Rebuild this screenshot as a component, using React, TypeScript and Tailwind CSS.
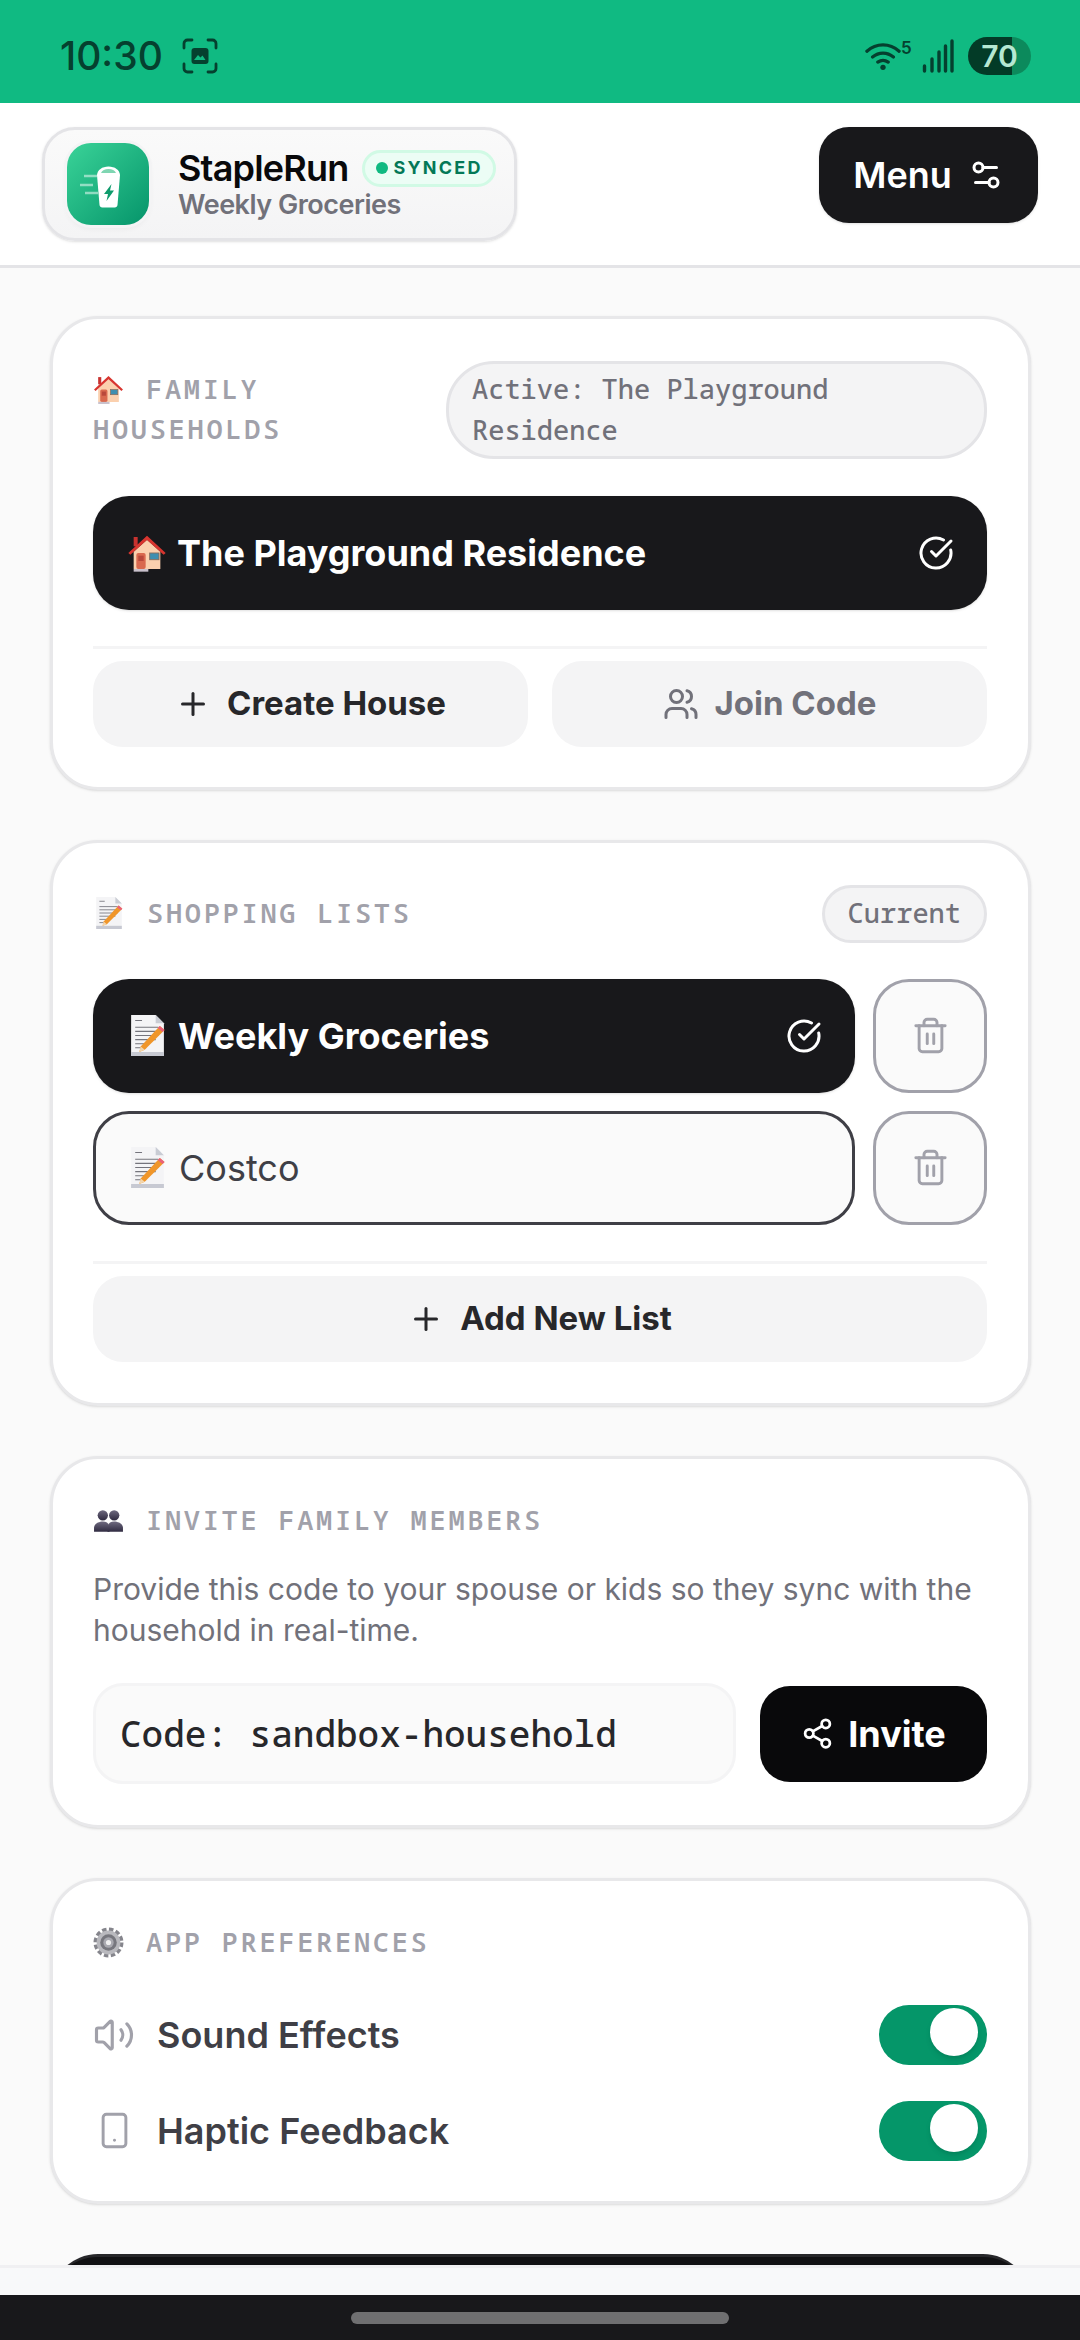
import { CircleCheckBig, Plus, Settings2, Share2, Smartphone, Trash2, Users, Volume2 } from 'lucide-react';
import type { ReactNode } from 'react';

function HouseEmoji({ size }: { size: number }) {
  return (
    <svg width={size} height={size} viewBox="0 0 30 30" className="shrink-0">
      <rect x="5" y="3" width="3" height="7" fill="#c8322f" />
      <path d="M5 14 15 5l10 9v13H5z" fill="#fbd0ae" />
      <path d="M1 15 15 2l14 13-1.500 1.400L15 5.200 2.500 16.400z" fill="#d8352f" />
      <rect x="7" y="15" width="7" height="12" rx="1.500" fill="#d9694f" />
      <rect x="8.500" y="17" width="4" height="4" fill="#b9483b" />
      <rect x="17" y="15" width="7" height="5" fill="#3f8fb0" stroke="#8a6d5c" strokeWidth="0.700" />
      <rect x="5" y="27" width="11" height="2" fill="#c9c1cc" />
    </svg>
  );
}

function MemoEmoji({ size }: { size: number }) {
  return (
    <svg width={size} height={size} viewBox="0 0 30 30" className="shrink-0">
      <path d="M3 0h18l6 6v24H3z" fill="#f4f4f6" />
      <path d="M21 0v6h6z" fill="#c9ccd4" />
      <path d="M3 27h24v3H3z" fill="#c7c9d2" />
      <path d="M6 4h5M6 9h17M6 12h17M6 15h17M6 18h15M6 21h10M6 24h8" stroke="#74747c" strokeWidth="0.800" />
      <path d="M10 23 24 8l3.500 3L13 25.500l-4 1.500z" fill="#f0962a" />
      <path d="M24 8l3.500 3-1.500 1.500-3.500-3z" fill="#e9607a" />
      <path d="M10 23l3 2.500-4 1.500z" fill="#f2d6ae" />
    </svg>
  );
}

function BustsEmoji({ size }: { size: number }) {
  return (
    <svg width={size} height={size} viewBox="0 0 30 30" className="shrink-0">
      <defs>
        <linearGradient id="bust" x1="0" y1="0" x2="0" y2="1">
          <stop offset="0" stopColor="#6f6a80" />
          <stop offset="1" stopColor="#2f2a40" />
        </linearGradient>
      </defs>
      <circle cx="20.500" cy="10" r="5" fill="url(#bust)" />
      <path d="M14 26v-4c0-4 3-6 6.500-6s8.500 2 8.500 6v4z" fill="url(#bust)" />
      <circle cx="9.500" cy="10" r="5" fill="url(#bust)" />
      <path d="M1 26v-4c0-4 5-6 8.500-6s6.500 2 6.500 6v4z" fill="url(#bust)" />
    </svg>
  );
}

function GearEmoji({ size }: { size: number }) {
  return (
    <svg width={size} height={size} viewBox="0 0 30 30" className="shrink-0">
      <circle cx="15" cy="15" r="12.500" fill="none" stroke="#85858c" strokeWidth="4" strokeDasharray="4.200 2.350" />
      <circle cx="15" cy="15" r="11.500" fill="#b9b9be" />
      <circle cx="15" cy="15" r="8" fill="#77777e" />
      <circle cx="15" cy="15" r="5" fill="#a9a9b0" />
      <circle cx="15" cy="15" r="2.500" fill="#eeeeef" />
    </svg>
  );
}

function LogoIcon() {
  return (
    <svg width="82" height="82" viewBox="0 0 82 82" fill="none">
      <path d="M17 33h13M13 42h13M18 50h13" stroke="#ffffff" strokeOpacity="0.5" strokeWidth="2.500" />
      <path d="M30 32c.5-5 5-8.500 11.500-8.500S52.500 27 53 32l-2.500 30c-.2 1.500-1.200 2.500-2.800 2.500H35.300c-1.600 0-2.600-1-2.800-2.500z" fill="#ffffff" />
      <path d="M34 30c1-2.500 4-4 7.500-4s6.500 1.500 7.500 4z" fill="#7fd6b2" />
      <path d="M44.500 41 37 51h4l-1.500 7L47 47.500h-4z" fill="#0f9b6c" />
    </svg>
  );
}

function ScreenshotIcon() {
  return (
    <svg width="36" height="36" viewBox="0 0 36 36" fill="none" stroke="#05402f" strokeWidth="2.800" strokeLinecap="round">
      <path d="M10 2H5.500A3.500 3.500 0 0 0 2 5.500V10M26 2h4.500A3.500 3.500 0 0 1 34 5.500V10M10 34H5.500A3.500 3.500 0 0 1 2 30.500V26M26 34h4.500a3.500 3.500 0 0 0 3.500-3.500V26" />
      <rect x="9.500" y="10" width="17" height="16" rx="3" fill="#05402f" stroke="none" />
      <path d="M12 22l4-5 2.500 2.500 2-2 3 4.500z" fill="#10b981" stroke="none" />
    </svg>
  );
}

function WifiIcon() {
  return (
    <svg width="36" height="30" viewBox="0 0 38 30" fill="none" stroke="#05402f" strokeWidth="3.400" strokeLinecap="round">
      <path d="M2 10c10-9 24-9 34 0M8 16c6.500-5.500 15.500-5.500 22 0M13.500 21.500c3.500-2.500 7.500-2.500 11 0" />
      <circle cx="19" cy="27" r="2.800" fill="#05402f" stroke="none" />
    </svg>
  );
}

function SignalIcon() {
  return (
    <svg width="32" height="34" viewBox="0 0 32 34" fill="none" stroke="#05402f" strokeWidth="3.400" strokeLinecap="round">
      <path d="M2.500 27v5M10 20v12M17 13v19M23.500 7v25M30 2v30" />
    </svg>
  );
}

function StatusBar() {
  return (
    <div className="flex h-[103px] items-center justify-between bg-[#10ba82] pt-[8px] pl-[60px] pr-[49px]">
      <div className="flex items-center gap-[19px]">
        <span className="text-[39px] leading-none font-medium text-[#05402f]">10:30</span>
        <ScreenshotIcon />
      </div>
      <div className="flex items-center">
        <WifiIcon />
        <span className="mb-[14px] w-[11px] text-[17px] leading-none font-semibold text-[#05402f]">5</span>
        <span className="ml-[10px] flex">
          <SignalIcon />
        </span>
        <div className="ml-[14px] flex h-[38px] w-[63px] items-center justify-center rounded-full bg-[linear-gradient(to_right,#033b27_70%,#0c8a5c_70%)] text-[30px] leading-none font-semibold text-[#b5e8d2]">
          70
        </div>
      </div>
    </div>
  );
}

function Header() {
  return (
    <div className="flex h-[165px] items-start justify-between border-b-[3px] border-[#e4e4e7] bg-white pt-[24px] pl-[42px] pr-[42px]">
      <div className="flex h-[114px] w-[475px] items-center gap-[29px] rounded-[33px] border-[3px] border-[#e4e4e7] bg-[linear-gradient(to_bottom,#fafafa,#f4f4f5)] pl-[22px] shadow-sm">
        <div className="h-[82px] w-[82px] shrink-0 rounded-[24px] bg-[linear-gradient(135deg,#3ad398,#05946a)] shadow-[0_0_0_3px_#f4f4f5,0_3px_6px_rgba(0,0,0,0.06)]">
          <LogoIcon />
        </div>
        <div className="flex flex-col">
          <div className="flex items-center gap-[13px]">
            <span className="text-[36px] leading-[42px] font-semibold tracking-[-0.8px] text-[#09090b]">StapleRun</span>
            <span className="flex h-[37px] w-[134px] items-center gap-[6px] rounded-full border-[3px] border-[#d1fae5] bg-[#ecfdf5] pl-[11px] text-[18px] leading-none font-bold tracking-[2.200px] text-[#047857]">
              <span className="h-[12px] w-[12px] rounded-full bg-[#10b981]" />
              SYNCED
            </span>
          </div>
          <span className="text-[27px] leading-[32px] font-semibold tracking-[-0.5px] text-[#71717a]">Weekly Groceries</span>
        </div>
      </div>
      <button className="flex h-[96px] w-[219px] items-center justify-center gap-[16px] rounded-[30px] bg-[#18181b] text-[36px] font-semibold text-white shadow-sm">
        Menu
        <Settings2 size={36} strokeWidth={2} />
      </button>
    </div>
  );
}

function Card({ children }: { children: ReactNode }) {
  return (
    <section className="rounded-[48px] border-[3px] border-[#e8e8ea] bg-white px-[40.5px] pt-[42px] pb-[40px] shadow-sm">
      {children}
    </section>
  );
}

function Heading({ icon, children }: { icon: ReactNode; children: ReactNode }) {
  return (
    <h2 className="-translate-y-[1px] font-['Noto_Sans_Mono','DejaVu_Sans_Mono',monospace] text-[27px] leading-[40.5px] font-semibold tracking-[2.700px] text-[#a1a1aa] uppercase">
      <span className="mr-[22px] inline-flex h-[20px] items-center align-[-6px]">{icon}</span>
      {children}
    </h2>
  );
}

function Pill({ children, className }: { children: ReactNode; className?: string }) {
  return (
    <span className={`rounded-[48px] border-[3px] border-[#e4e4e7] bg-[#f4f4f5] px-[23px] pt-[5px] pb-[6px] font-['Noto_Sans_Mono','DejaVu_Sans_Mono',monospace] text-[27px] leading-[40.5px] font-medium text-[#71717a] ${className ?? ''}`}>
      {children}
    </span>
  );
}

function ActiveRow({ emoji, label }: { emoji: ReactNode; label: string }) {
  return (
    <div className="flex h-[114px] min-w-0 flex-1 items-center rounded-[36px] bg-[#18181b] pl-[34px] pr-[33px] text-white shadow-sm">
      {emoji}
      <span className="ml-[10px] flex-1 text-[36px] font-bold">{label}</span>
      <CircleCheckBig size={36} strokeWidth={2} />
    </div>
  );
}

function GhostButton({ children, muted }: { children: ReactNode; muted?: boolean }) {
  return (
    <button className={`flex h-[86px] flex-1 items-center justify-center gap-[16px] rounded-[30px] bg-[#f4f4f5] text-[33px] font-bold ${muted ? 'text-[#71717a]' : 'text-[#27272a]'}`}>
      {children}
    </button>
  );
}

function TrashButton() {
  return (
    <button className="flex h-[114px] w-[114px] shrink-0 items-center justify-center rounded-[36px] border-[3px] border-[#a1a1aa] bg-[#fafafa] text-[#a1a1aa]">
      <Trash2 size={39} strokeWidth={1.800} />
    </button>
  );
}

function Toggle() {
  return (
    <div className="flex h-[60px] w-[108px] justify-end rounded-full bg-[#059669] pt-[3px] pr-[9px]">
      <div className="h-[48px] w-[48px] rounded-full bg-white shadow-md" />
    </div>
  );
}

function PrefRow({ icon, label }: { icon: ReactNode; label: string }) {
  return (
    <div className="flex h-[60px] items-center">
      <span className="flex w-[42px] justify-center text-[#a1a1aa]">{icon}</span>
      <span className="ml-[22px] flex-1 text-[36px] font-semibold text-[#3f3f46]">{label}</span>
      <Toggle />
    </div>
  );
}

export default function App() {
  return (
    <div className="flex h-[2340px] flex-col overflow-hidden bg-[#fafafa] font-['Inter',sans-serif]">
      <StatusBar />
      <Header />

      <main className="flex min-h-0 flex-1 flex-col gap-[50px] overflow-hidden px-[49.5px] pt-[48px]">
        <Card>
          <div className="flex items-center justify-between">
            <Heading icon={<HouseEmoji size={31} />}>
              Family
              <br />
              Households
            </Heading>
            <Pill className="w-[541px]">Active: The Playground Residence</Pill>
          </div>
          <div className="mt-[37px] flex">
            <ActiveRow emoji={<HouseEmoji size={40} />} label="The Playground Residence" />
          </div>
          <div className="mt-[36px] border-t-[3px] border-[#f4f4f5] pt-[12px]">
            <div className="flex gap-[24px]">
              <GhostButton>
                <Plus size={36} strokeWidth={2} />
                Create House
              </GhostButton>
              <GhostButton muted>
                <Users size={36} strokeWidth={2} />
                Join Code
              </GhostButton>
            </div>
          </div>
        </Card>

        <Card>
          <div className="flex items-center justify-between">
            <Heading icon={<MemoEmoji size={32} />}>Shopping Lists</Heading>
            <Pill>Current</Pill>
          </div>
          <div className="mt-[36px] flex flex-col gap-[18px]">
            <div className="flex gap-[18px]">
              <ActiveRow emoji={<MemoEmoji size={41} />} label="Weekly Groceries" />
              <TrashButton />
            </div>
            <div className="flex gap-[18px]">
              <div className="flex h-[114px] flex-1 items-center rounded-[36px] border-[3px] border-[#3f3f46] bg-[#fafafa] pl-[31px] text-[36px] text-[#3f3f46]">
                <MemoEmoji size={41} />
                <span className="ml-[11px]">Costco</span>
              </div>
              <TrashButton />
            </div>
          </div>
          <div className="mt-[36px] border-t-[3px] border-[#f4f4f5] pt-[12px]">
            <div className="flex">
              <GhostButton>
                <Plus size={36} strokeWidth={2} />
                Add New List
              </GhostButton>
            </div>
          </div>
          <div className="h-[1px]" />
        </Card>

        <Card>
          <Heading icon={<BustsEmoji size={31} />}>Invite Family Members</Heading>
          <p className="mt-[28px] text-[30px] leading-[41px] text-[#71717a]">
            Provide this code to your spouse or kids so they sync with the household in real-time.
          </p>
          <div className="mt-[32px] mb-[1px] flex items-center gap-[24px]">
            <div className="flex h-[101px] flex-1 items-center rounded-[30px] border-[3px] border-[#f4f4f5] bg-[#fafafa] pl-[24px] font-['Noto_Sans_Mono','DejaVu_Sans_Mono',monospace] text-[36px] font-medium text-[#27272a]">
              Code: sandbox-household
            </div>
            <button className="flex h-[96px] w-[227px] items-center justify-center gap-[14px] rounded-[30px] bg-[#09090b] text-[36px] font-bold text-white">
              <Share2 size={33} strokeWidth={2} />
              Invite
            </button>
          </div>
        </Card>

        <Card>
          <Heading icon={<GearEmoji size={31} />}>App Preferences</Heading>
          <div className="mt-[41px] flex flex-col gap-[36px]">
            <PrefRow icon={<Volume2 size={42} strokeWidth={1.800} />} label="Sound Effects" />
            <PrefRow icon={<Smartphone size={39} strokeWidth={1.800} />} label="Haptic Feedback" />
          </div>
        </Card>

        <div className="h-[114px] shrink-0 rounded-[48px] border-t-[3px] border-[#27272a] bg-[#111113]" />
      </main>

      <div className="h-[30px] shrink-0 border-t-[3px] border-[#f0f0f2] bg-[#f8f9fa]" />
      <div className="flex h-[45px] shrink-0 items-center justify-center bg-[#18181b]">
        <div className="h-[12px] w-[378px] rounded-full bg-[#6f6f71]" />
      </div>
    </div>
  );
}
